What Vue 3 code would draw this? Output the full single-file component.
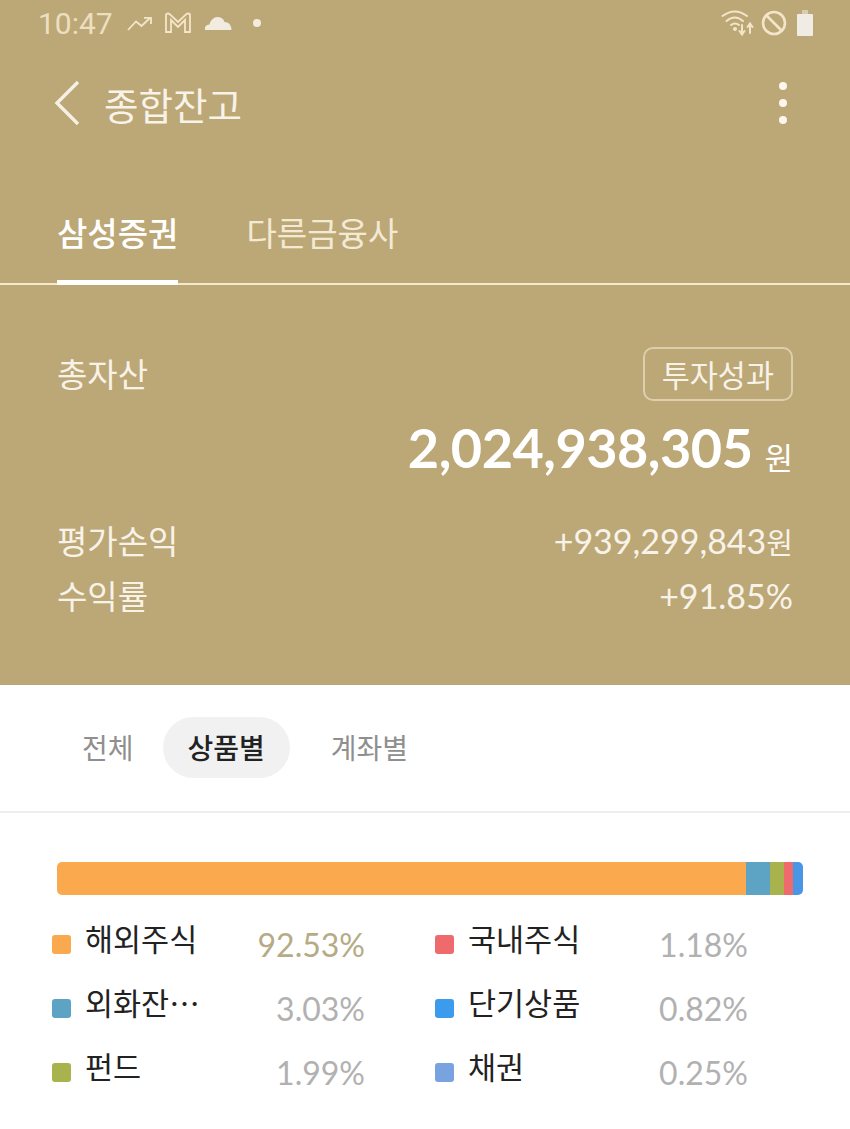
<template>
  <div class="page">
    <section class="hero">
      <div class="status">
        <div class="status-left">
          <span class="clock">10:47</span>
          <svg class="ic-trend" width="25" height="15" viewBox="0 0 25 15" fill="none" stroke="#f3e6c8" stroke-width="1.8">
            <path d="M1 14 L9 5.500 L14.500 10 L23 2" />
            <path d="M17 1.800 H24 V8" />
          </svg>
          <svg class="ic-mail" width="28" height="22" viewBox="0 0 28 22" fill="none" stroke="#f3e6c8" stroke-width="1.8">
            <path d="M2 20 V3 Q2 1.500 4 1.500 Q5.500 1.500 6.500 3 L14 10 L21.500 3 Q22.500 1.500 24 1.500 Q26 1.500 26 3 V20 H21 V8 L14 15 L7 8 V20 Z" />
          </svg>
          <svg class="ic-cloud" width="28" height="16" viewBox="0 0 28 16">
            <path d="M1 15 Q0 10 5.500 9.500 Q7 3 13 2 Q19 2 20.500 7 Q27 7 27.500 15 Z" fill="#f1ecdf" />
          </svg>
          <span class="dot"></span>
        </div>
        <div class="status-right">
          <svg width="34" height="28" viewBox="0 0 34 28" fill="none" stroke="#f3e6c8" stroke-width="2" stroke-linecap="round">
            <path d="M1.500 7 Q14 -2 26 7" />
            <path d="M5.500 12 Q14 5 22 12" />
            <path d="M10 16 Q14 13 18 16" />
            <circle cx="14" cy="20" r="1" fill="#f3e6c8" />
            <path d="M21 16 V25 M18.500 22 L21 25.500 L23.500 22" />
            <path d="M29 24 V15 M26.500 18 L29 14.500 L31.500 18" />
          </svg>
          <svg class="ic-ban" width="26" height="26" viewBox="0 0 26 26" fill="none" stroke="#f3e6c8" stroke-width="2.600">
            <circle cx="13" cy="13" r="11" />
            <path d="M5.500 5.500 L20.500 20.500" />
          </svg>
          <svg class="ic-batt" width="18" height="28" viewBox="0 0 18 28">
            <rect x="6" y="1" width="6" height="5" fill="#d8cdb0" />
            <rect x="1" y="5" width="16" height="22" rx="1" fill="#f0ebe4" />
          </svg>
        </div>
      </div>

      <div class="title-row">
        <svg class="back" width="26" height="46" viewBox="0 0 26 46" fill="none" stroke="#f6f1e4" stroke-width="3.400">
          <path d="M24 2 L3 23 L24 44" />
        </svg>
        <h1 class="title">종합잔고</h1>
        <div class="more"><i></i><i></i><i></i></div>
      </div>

      <div class="tabs">
        <span class="tab on">삼성증권</span>
        <span class="tab">다른금융사</span>
      </div>

      <div class="summary">
        <div class="total-head">
          <span class="label">총자산</span>
          <span class="perf">투자성과</span>
        </div>
        <div class="total"><b>2,024,938,305</b><span>원</span></div>
        <div class="line"><span class="label">평가손익</span><span class="num">+939,299,843<small>원</small></span></div>
        <div class="line"><span class="label">수익률</span><span class="num">+91.85%</span></div>
      </div>
    </section>

    <nav class="segs">
      <span class="seg">전체</span>
      <span class="seg on">상품별</span>
      <span class="seg">계좌별</span>
    </nav>

    <section class="chart">
      <div class="bar">
        <span v-for="p in parts" :key="p.color" :style="{ width: p.width + 'px', background: p.color }"></span>
      </div>
      <div class="legend">
        <div v-for="(row, i) in legend" :key="row.name" class="item">
          <span class="swatch" :style="{ background: row.color }"></span>
          <span class="name">{{ row.name }}</span>
          <span class="pct" :class="{ top: i === 0 }">{{ row.pct }}</span>
        </div>
      </div>
    </section>
  </div>
</template>

<script setup>
const parts = [
  { width: 690, color: '#fba94e' },
  { width: 24, color: '#5da3c4' },
  { width: 14, color: '#a8b34e' },
  { width: 9, color: '#ee6a6c' },
  { width: 10, color: '#4a96e6' },
];

// column order: left then right, row by row
const legend = [
  { name: '해외주식', pct: '92.53%', color: '#fba94e' },
  { name: '국내주식', pct: '1.18%', color: '#ee6a6c' },
  { name: '외화잔…', pct: '3.03%', color: '#5da3c4' },
  { name: '단기상품', pct: '0.82%', color: '#3d9bee' },
  { name: '펀드', pct: '1.99%', color: '#a8b34e' },
  { name: '채권', pct: '0.25%', color: '#78a3e0' },
];
</script>

<style>
html, body {
  margin: 0;
  background: #fff;
}
</style>

<style scoped>
.page {
  width: 850px;
  height: 1129px;
  overflow: hidden;
  font-family: "Lato", "Noto Sans CJK KR", sans-serif;
}

.hero {
  height: 685px;
  background: #bca777;
  color: #f8f3e8;
  display: flex;
  flex-direction: column;
}

.status {
  height: 48px;
  padding: 0 36px 2px 38px;
  box-sizing: border-box;
  display: flex;
  justify-content: space-between;
  align-items: center;
}

.status-left,
.status-right {
  display: flex;
  align-items: center;
}

.clock {
  font-family: "Roboto", sans-serif;
  font-size: 30px;
  color: #ecdfc0;
  margin-right: 14px;
}

.ic-mail {
  margin-left: 12px;
}

.ic-cloud {
  margin-left: 12px;
}

.dot {
  width: 8px;
  height: 8px;
  margin-left: 21px;
  border-radius: 50%;
  background: #f3ecdc;
}

.ic-ban {
  margin-left: 6px;
}

.ic-batt {
  margin-left: 9px;
}

.title-row {
  height: 60px;
  margin-top: 25px;
  padding-left: 54px;
  padding-right: 63px;
  display: flex;
  align-items: center;
}

.title {
  margin: 0 0 0 24px;
  font-size: 37.500px;
  font-weight: 400;
  font-family: "Noto Sans CJK KR", sans-serif;
}

.more {
  margin-left: auto;
  display: flex;
  flex-direction: column;
  gap: 9px;
}

.more i {
  width: 8px;
  height: 8px;
  border-radius: 50%;
  background: #fbf7ec;
}

.tabs {
  margin-top: 47px;
  height: 103px;
  padding-left: 57px;
  display: flex;
  align-items: flex-start;
  gap: 68px;
  border-bottom: 2px solid #f5e9cc;
  flex: none;
}

.tab {
  font-family: "Noto Sans CJK KR", sans-serif;
  font-size: 33px;
  line-height: 104px;
  height: 100px;
  color: #f3ead6;
}

.tab.on {
  color: #fff;
  font-weight: 500;
  border-bottom: 5px solid #fff;
}

.summary {
  padding: 62px 57px 0;
}

.total-head {
  display: flex;
  justify-content: space-between;
  align-items: center;
}

.label {
  font-family: "Noto Sans CJK KR", sans-serif;
  font-size: 33px;
  color: #f8f3e8;
  position: relative;
  top: -1px;
}

.perf {
  font-family: "Noto Sans CJK KR", sans-serif;
  font-size: 30.500px;
  line-height: 50px;
  padding: 0 17px;
  border: 2px solid #ddcfae;
  border-radius: 10px;
}

.total {
  display: flex;
  justify-content: flex-end;
  align-items: baseline;
  margin-top: 14px;
  margin-bottom: 33px;
  color: #fff;
}

.total b {
  font-size: 54px;
  font-weight: 700;
  letter-spacing: -0.5px;
}

.total span {
  font-family: "Noto Sans CJK KR", sans-serif;
  font-size: 31px;
  margin-left: 12px;
  position: relative;
  top: 2px;
}

.line {
  display: flex;
  justify-content: space-between;
  align-items: center;
  height: 55px;
}

.num {
  font-size: 34px;
}

.num small {
  font-family: "Noto Sans CJK KR", sans-serif;
  font-size: 29px;
}

.segs {
  height: 128px;
  box-sizing: border-box;
  padding: 32px 0 0 57px;
  display: flex;
  align-items: flex-start;
  border-bottom: 2px solid #eee;
}

.seg {
  font-family: "Noto Sans CJK KR", sans-serif;
  font-size: 28px;
  line-height: 61px;
  padding: 0 25px;
  color: #8f8f8f;
  border-radius: 31px;
}

.seg.on {
  margin: 0 16px 0 4px;
  color: #222;
  font-weight: 500;
  background: #f1f1f1;
}

.chart {
  padding: 49px 47px 0 52px;
}

.bar {
  margin-left: 5px;
  display: flex;
  height: 33px;
  border-radius: 5px;
  overflow: hidden;
}

.legend {
  margin-top: 17px;
  display: grid;
  grid-template-columns: 313px 313px;
  column-gap: 70px;
}

.item {
  display: flex;
  align-items: center;
  height: 64px;
}

.swatch {
  width: 19px;
  height: 19px;
  border-radius: 3px;
  flex: none;
}

.name {
  margin-left: 14px;
  font-family: "Noto Sans CJK KR", sans-serif;
  font-size: 30.500px;
  color: #222;
  position: relative;
  top: -6px;
}

.pct {
  margin-left: auto;
  font-size: 32px;
  color: #b1b1b1;
}

.pct.top {
  color: #b5ab85;
}
</style>
